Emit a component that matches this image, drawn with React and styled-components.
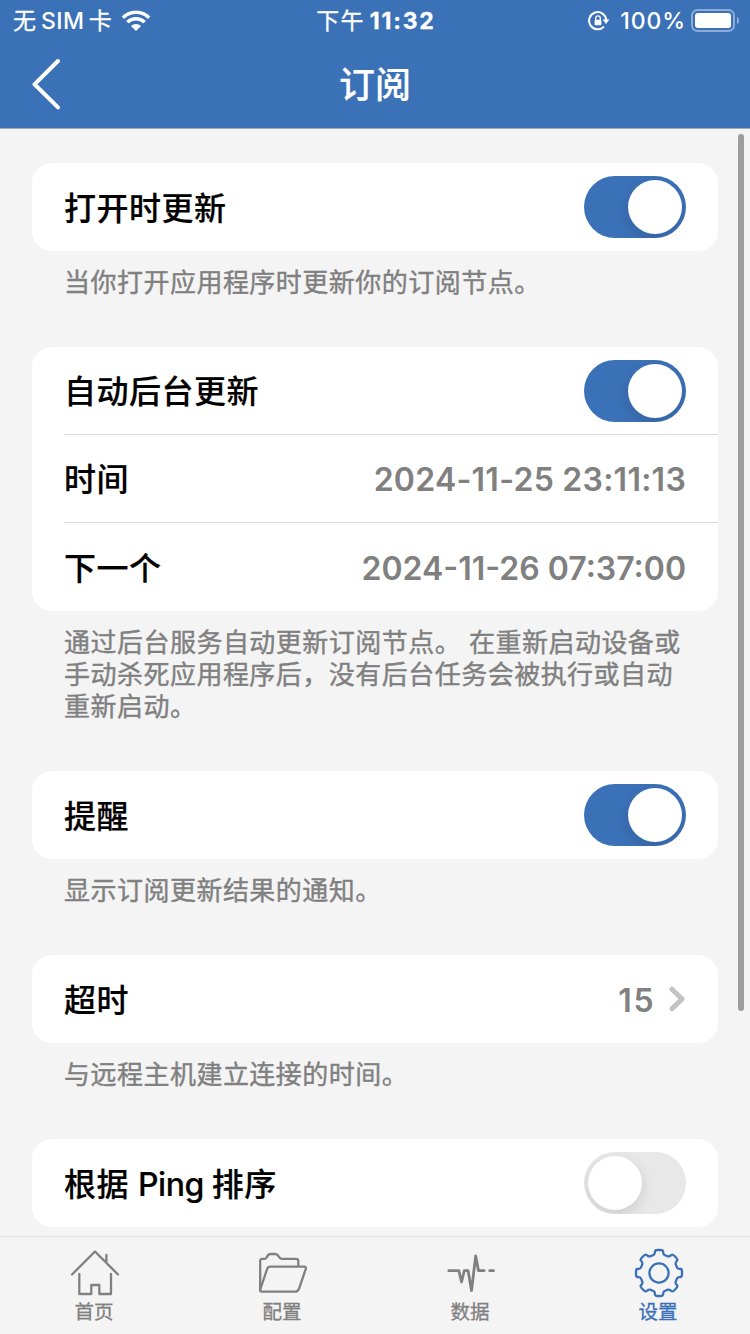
import React, { useState } from 'react';
import styled, { createGlobalStyle } from 'styled-components';

const GlobalStyle = createGlobalStyle`
    body {
        margin: 0;
        overflow: hidden;
        font-family: Inter, "Noto Sans CJK SC", sans-serif;
    }
`

const Screen = styled.div`
    position: relative;
    display: flex;
    flex-direction: column;
    width: 750px;
    height: 1334px;
    overflow: hidden;
    background-color: #f4f4f4;
`

const Header = styled.header`
    flex: none;
    height: 128px;
    color: white;
    background-color: #3b71b7;
    border-bottom: 1px solid #a8a8a8;
`

const StatusBar = styled.div`
    display: grid;
    grid-template-columns: 1fr auto 1fr;
    align-items: center;
    height: 40px;
    padding: 0 11px 0 13px;
    font-size: 23px;
    font-weight: 500;
    white-space: nowrap;
`

const StatusGroup = styled.div`
    display: flex;
    align-items: center;
    justify-content: ${props => props.$end ? 'flex-end' : 'flex-start'};
`

const StatusText = styled.span`
    padding-top: 2px;
    line-height: 38px;
    font-weight: ${props => props.$weight || 500};
    letter-spacing: ${props => props.$spacing || 0}px;
    margin-left: ${props => props.$left || 0}px;
    -webkit-text-stroke: ${props => props.$stroke || 0}px currentColor;
`

const Icon = styled.svg`
    flex: none;
    display: block;
    margin-left: ${props => props.$left || 0}px;
    margin-top: ${props => props.$top || 0}px;
`

const NavBar = styled.div`
    display: grid;
    grid-template-columns: 100px 1fr 100px;
    align-items: center;
    height: 88px;
`

const BackButton = styled.button`
    height: 88px;
    padding: 0 0 0 30px;
    border: 0;
    background: none;
`

const Title = styled.h1`
    margin: 0;
    padding-top: 1px;
    text-align: center;
    font-size: 36px;
    line-height: 52px;
    font-weight: 500;
    -webkit-text-stroke: 0.2px currentColor;
`

const Content = styled.main`
    flex: 1;
    min-height: 0;
    overflow: hidden;
    padding: 34px 32px 0;
`

const Card = styled.section`
    border-radius: 20px;
    background-color: white;
`

const Row = styled.div`
    display: flex;
    align-items: center;
    justify-content: space-between;
    box-sizing: border-box;
    height: 88px;
    margin-left: 32px;
    padding-right: 32px;
    border-bottom: ${props => props.$last ? '0' : '1px solid #dcdcdc'};
`

const Label = styled.span`
    padding-top: 3px;
    font-size: 32px;
    line-height: 48px;
    font-weight: 500;
    letter-spacing: 0.5px;
    color: black;
    -webkit-text-stroke: 0.2px currentColor;
`

const Latin = styled.span`
    margin-right: -1px;
    letter-spacing: -0.5px;
`

const Value = styled.span`
    display: flex;
    align-items: center;
    padding-top: 3px;
    font-size: 32px;
    line-height: 48px;
    font-weight: 600;
    letter-spacing: ${props => props.$spacing || 0}px;
    color: #808080;
`

const Footer = styled.p`
    margin: 0;
    padding: 16px 0 48px 32px;
    font-size: 26px;
    line-height: 32px;
    letter-spacing: 0.48px;
    white-space: nowrap;
    color: #808080;
    -webkit-text-stroke: 0.4px currentColor;
`

const Switch = styled.button`
    display: flex;
    justify-content: ${props => props.$on ? 'flex-end' : 'flex-start'};
    box-sizing: border-box;
    width: 102px;
    height: 62px;
    padding: 4px;
    border: 0;
    border-radius: 31px;
    overflow: hidden;
    background-color: ${props => props.$on ? '#3b71b7' : '#e8e8e8'};
`

const Knob = styled.span`
    width: 54px;
    height: 54px;
    border-radius: 50%;
    background-color: white;
    box-shadow: 0 5px 14px rgba(0, 0, 0, 0.12);
`

const ScrollBar = styled.div`
    position: absolute;
    top: 134px;
    right: 6px;
    width: 6px;
    height: 877px;
    border-radius: 3px;
    background-color: #9c9c9c;
`

const TabBar = styled.nav`
    flex: none;
    display: grid;
    grid-template-columns: repeat(4, 188px);
    box-sizing: border-box;
    height: 98px;
    border-top: 1px solid #dfdfdf;
    background-color: #f4f4f4;
`

const Tab = styled.a`
    display: flex;
    flex-direction: column;
    align-items: center;
    padding-top: 11px;
    color: ${props => props.$active ? '#3b71b7' : '#808080'};
`

const TabLabel = styled.span`
    margin-top: -1px;
    font-size: 19.5px;
    line-height: 30px;
    -webkit-text-stroke: 0.3px currentColor;
`

// one tooth of the gear, repeated every 45 degrees
const toothPoints = [[-5.9, -17.8], [-4.4, -18.9], [-3.8, -23], [3.8, -23], [4.4, -18.9], [5.9, -17.8]]

const gearPath = () => {
    let points = [];
    for (let i = 0; i < 8; i++) {
        const a = i * Math.PI / 4
        toothPoints.forEach(([x, y]) => {
            points.push([
                25 + x * Math.cos(a) - y * Math.sin(a),
                25 + x * Math.sin(a) + y * Math.cos(a)
            ])
        })
    }
    // corners are rounded by running curves between the edge midpoints
    const corner = (p, q, t) => `${(p[0] + (q[0] - p[0]) * t).toFixed(2)} ${(p[1] + (q[1] - p[1]) * t).toFixed(2)}`
    return points.map((p, i) => {
        const prev = points[(i + points.length - 1) % points.length]
        const next = points[(i + 1) % points.length]
        return `${i ? 'L' : 'M'}${corner(p, prev, 0.32)} Q${corner(p, p, 0)} ${corner(p, next, 0.32)}`
    }).join(' ') + 'Z'
}

const TabIcon = ({ children, x = 0, width = 2.3 }) => (
    <Icon width="50" height="50" viewBox={`${x} 0 50 50`} $left={2} fill="none" stroke="currentColor"
        strokeWidth={width} strokeLinecap="round" strokeLinejoin="round">{children}</Icon>
)

const HomeIcon = () => (
    <TabIcon>
        <path d="M2 26.5 25 3.5 48 26.5M36.4 14V6.8M9.3 26V46H21.3V37H29.3V46H41V26" />
    </TabIcon>
)

const FolderIcon = () => (
    <TabIcon x={1}>
        <path d="M3.2 42V13q0-2.2 2.2-2.2h2.3q1.6 0 2.2-1.6.9-3.2 4-3.2h4.2q2.2 0 3.6 2.3 1.2 2.5 3.2 2.5H39q2.3 0 2.3 2.3v4.8" />
        <path d="M3.2 41.5 10.2 20.8q.8-2.2 3.2-2.2H47q2.4 0 1.8 2.2l-6.5 19q-1.2 3.9-4 3.9H5.5q-3 0-2.3-2.2Z" />
    </TabIcon>
)

const PulseIcon = () => (
    <TabIcon x={0.7} width={2.8}>
        <path d="M3.5 22.7H13.6L16.2 34 19 22.7H22.8L26.2 42.5 30.4 8 33.2 22.7H38.8M44.4 22.7H48.2" />
    </TabIcon>
)

const GearIcon = () => (
    <TabIcon>
        <path d={gearPath()} />
        <circle cx="25" cy="25" r="9.6" />
    </TabIcon>
)

const WifiIcon = () => (
    <Icon width="30" height="23" viewBox="0 0 30 23" $left={9} fill="white">
        <path d="M.6 7.4A20.3 20.3 0 0 1 29.4 7.4L26.9 9.9A16.8 16.8 0 0 0 3.1 9.9Z" />
        <path d="M5.1 12.1A14.2 14.2 0 0 1 24.9 12.1L22.4 14.6A10.6 10.6 0 0 0 7.6 14.6Z" />
        <path d="M9.9 16.9A7.6 7.6 0 0 1 20.1 16.9L15 22.1Z" />
    </Icon>
)

const LockIcon = () => (
    <Icon width="22" height="20" viewBox="0 0 22 20" $top={1} fill="none">
        <path d="M16 15.6A8.6 8.6 0 1 1 18.3 9.2" stroke="white" strokeWidth="2" />
        <path d="M14.6 8.5H21.4L18 13Z" fill="white" />
        <path d="M7.7 9V7.2a2.3 2.3 0 0 1 4.6 0V9" stroke="white" strokeWidth="1.3" />
        <rect x="6.6" y="8.8" width="6.8" height="5.4" rx=".9" fill="white" />
    </Icon>
)

const BatteryIcon = () => (
    <Icon width="48" height="23" viewBox="0 0 48 23" $left={5}>
        <rect x="1" y="1" width="42" height="21" rx="5.5" fill="none" stroke="white" strokeOpacity=".42" strokeWidth="2" />
        <rect x="4" y="4" width="36" height="15" rx="3" fill="white" />
        <path d="M46 7.8q2 1.2 2 3.7t-2 3.7Z" fill="white" fillOpacity=".45" />
    </Icon>
)

const Toggle = ({ defaultOn }) => {
    const [on, setOn] = useState(defaultOn)
    return <Switch $on={on} role="switch" aria-checked={on} onClick={() => setOn(!on)}><Knob /></Switch>
}

const tabs = [
    { label: '首页', icon: <HomeIcon /> },
    { label: '配置', icon: <FolderIcon /> },
    { label: '数据', icon: <PulseIcon /> },
    { label: '设置', icon: <GearIcon />, active: true }
]

const App = () => (
    <Screen lang="zh-CN">
        <GlobalStyle />
        <Header>
            <StatusBar>
                <StatusGroup>
                    <StatusText $weight={400} $stroke={0.3}>无</StatusText>
                    <StatusText $left={5} $spacing={0.5}>SIM</StatusText>
                    <StatusText $left={4} $weight={400} $stroke={0.3}>卡</StatusText>
                    <WifiIcon />
                </StatusGroup>
                <StatusGroup>
                    <StatusText $weight={400} $spacing={1.2} $stroke={0.3}>下午</StatusText>
                    <StatusText $left={5} $weight={700} $spacing={1.8} $stroke={0.3}>11:32</StatusText>
                </StatusGroup>
                <StatusGroup $end>
                    <LockIcon />
                    <StatusText $left={10} $spacing={0.9}>100%</StatusText>
                    <BatteryIcon />
                </StatusGroup>
            </StatusBar>
            <NavBar>
                <BackButton>
                    <Icon width="32" height="52" viewBox="0 0 32 52" fill="none" stroke="white"
                        strokeWidth="4" strokeLinecap="round" strokeLinejoin="round">
                        <path d="M28 3 4.5 26.3 28 49.4" />
                    </Icon>
                </BackButton>
                <Title>订阅</Title>
            </NavBar>
        </Header>
        <Content>
            <Card>
                <Row $last><Label>打开时更新</Label><Toggle defaultOn /></Row>
            </Card>
            <Footer>当你打开应用程序时更新你的订阅节点。</Footer>
            <Card>
                <Row><Label>自动后台更新</Label><Toggle defaultOn /></Row>
                <Row><Label>时间</Label><Value $spacing={0.25}>2024-11-25 23:11:13</Value></Row>
                <Row $last><Label>下一个</Label><Value>2024-11-26 07:37:00</Value></Row>
            </Card>
            <Footer>
                通过后台服务自动更新订阅节点。 在重新启动设备或<br />
                手动杀死应用程序后，没有后台任务会被执行或自动<br />
                重新启动。
            </Footer>
            <Card>
                <Row $last><Label>提醒</Label><Toggle defaultOn /></Row>
            </Card>
            <Footer>显示订阅更新结果的通知。</Footer>
            <Card>
                <Row $last>
                    <Label>超时</Label>
                    <Value $spacing={1.5}>
                        15
                        <Icon width="17" height="26" viewBox="0 0 17 26" $left={14} $top={-3} fill="none"
                            stroke="#c2c2c4" strokeWidth="5" strokeLinecap="round" strokeLinejoin="round">
                            <path d="M3 3.2 13 13 3 22.8" />
                        </Icon>
                    </Value>
                </Row>
            </Card>
            <Footer>与远程主机建立连接的时间。</Footer>
            <Card>
                <Row $last><Label>根据 <Latin>Ping</Latin> 排序</Label><Toggle defaultOn={false} /></Row>
            </Card>
        </Content>
        <ScrollBar />
        <TabBar>
            {tabs.map(tab => (
                <Tab key={tab.label} $active={tab.active}>
                    {tab.icon}
                    <TabLabel>{tab.label}</TabLabel>
                </Tab>
            ))}
        </TabBar>
    </Screen>
)

export default App;
